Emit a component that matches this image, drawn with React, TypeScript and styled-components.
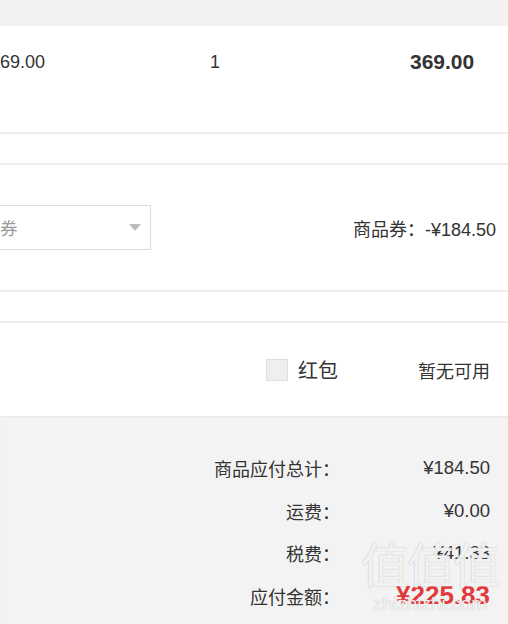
import React from "react";
import styled, { createGlobalStyle } from "styled-components";

const Global = createGlobalStyle`
  html, body { margin: 0; padding: 0; background: #fff; overflow: hidden; }
  body { font-family: "Liberation Sans", "Noto Sans CJK SC", sans-serif; color: #333; }
`;

const Page = styled.div`
  position: relative;
  width: 508px;
  height: 624px;
  overflow: hidden;
  display: flex;
  flex-direction: column;
`;

const HeaderBand = styled.div`
  height: 26px;
  background: #f2f2f2;
  flex-shrink: 0;
`;

const ProductRow = styled.div`
  height: 108px;
  display: flex;
  align-items: flex-start;
  padding-top: 23px;
  box-sizing: border-box;
  border-bottom: 2px solid #ededed;
  flex-shrink: 0;
`;

const Cell = styled.div<{ $w: number; $offset?: number; $bold?: boolean; $size?: number }>`
  width: ${(p) => p.$w}px;
  margin-left: ${(p) => p.$offset ?? 0}px;
  font-size: ${(p) => p.$size ?? 18}px;
  font-weight: ${(p) => (p.$bold ? 700 : 400)};
  line-height: 26px;
  color: #333;
  flex-shrink: 0;
`;

const Gap = styled.div<{ $h: number }>`
  height: ${(p) => p.$h}px;
  flex-shrink: 0;
`;

const Section = styled.div<{ $h: number; $pr: number; $noBottom?: boolean }>`
  height: ${(p) => p.$h}px;
  box-sizing: border-box;
  border-top: 2px solid #ededed;
  border-bottom: ${(p) => (p.$noBottom ? "none" : "2px solid #ededed")};
  display: flex;
  align-items: center;
  justify-content: space-between;
  padding-right: ${(p) => p.$pr}px;
  flex-shrink: 0;
`;

const Select = styled.div`
  width: 230px;
  height: 45px;
  margin-left: -79px;
  box-sizing: border-box;
  border: 1px solid #dcdcdc;
  display: flex;
  align-items: center;
  justify-content: space-between;
  padding: 0 9px 0 8px;
  font-size: 17.5px;
  color: #9a9a9a;
  font-family: "Noto Sans CJK SC", sans-serif;
`;

const Caret = styled.span`
  width: 0;
  height: 0;
  border-left: 6px solid transparent;
  border-right: 6px solid transparent;
  border-top: 7px solid #bdbdbd;
`;

const CouponValue = styled.div`
  display: flex;
  align-items: baseline;
  color: #333;
`;

const CJK = styled.span<{ $size?: number }>`
  font-family: "Noto Sans CJK SC", sans-serif;
  font-size: ${(p) => p.$size ?? 17}px;
`;

const Num = styled.span<{ $size?: number }>`
  font-family: "Liberation Sans", sans-serif;
  font-size: ${(p) => p.$size ?? 18}px;
`;

const RedPacketRow = styled.div`
  display: flex;
  align-items: center;
  margin-left: auto;
`;

const Checkbox = styled.span`
  width: 22px;
  height: 22px;
  box-sizing: border-box;
  background: #efefef;
  border: 1px solid #dedede;
  margin-right: 10px;
`;

const RedLabel = styled.span`
  font-family: "Noto Sans CJK SC", sans-serif;
  font-size: 20px;
  color: #333;
  width: 120px;
`;

const NoneText = styled.span`
  font-family: "Noto Sans CJK SC", sans-serif;
  font-size: 18px;
  color: #333;
`;

const Summary = styled.div`
  flex: 1;
  background: #f3f3f3;
  box-shadow: inset 0 2px 2px -1px #e6e6e6;
  padding-top: 31px;
  display: flex;
  flex-direction: column;
`;

const SumRow = styled.div`
  height: 42.5px;
  display: grid;
  grid-template-columns: 1fr 150px;
  align-items: center;
  padding-right: 18px;
  flex-shrink: 0;
`;

const SumLabel = styled.span`
  font-family: "Noto Sans CJK SC", sans-serif;
  font-size: 18px;
  color: #333;
  text-align: right;
`;

const SumValue = styled.span<{ $total?: boolean }>`
  text-align: right;
  font-family: "Liberation Sans", sans-serif;
  font-size: ${(p) => (p.$total ? 26 : 18.5)}px;
  font-weight: ${(p) => (p.$total ? 700 : 400)};
  color: ${(p) => (p.$total ? "#e4393c" : "#333")};
`;

const Watermark = styled.div`
  position: absolute;
  left: 356px;
  top: 530px;
  width: 148px;
  display: flex;
  flex-direction: column;
  align-items: center;
  pointer-events: none;
  color: rgba(255, 255, 255, 0.85);
  text-shadow: 0 0 1px rgba(120, 120, 120, 0.6);
`;

const WmBig = styled.span`
  font-family: "Noto Sans CJK SC", sans-serif;
  font-size: 48px;
  line-height: 64px;
  letter-spacing: -2px;
`;

const WmSmall = styled.span`
  font-family: "Liberation Sans", sans-serif;
  font-size: 19px;
  line-height: 20px;
`;

const summary = [
  { label: "商品应付总计：", value: "¥184.50" },
  { label: "运费：", value: "¥0.00" },
  { label: "税费：", value: "¥41.33" },
  { label: "应付金额：", value: "¥225.83", total: true },
];

export default function App() {
  return (
    <Page>
      <Global />
      <HeaderBand />
      <ProductRow>
        <Cell $w={220} $offset={-10}>369.00</Cell>
        <Cell $w={200}>1</Cell>
        <Cell $w={70} $bold $size={21}>369.00</Cell>
      </ProductRow>
      <Gap $h={29} />
      <Section $h={129} $pr={12}>
        <Select>
          <span>使用商品券</span>
          <Caret />
        </Select>
        <CouponValue>
          <CJK $size={18}>商品券：</CJK>
          <Num>-¥184.50</Num>
        </CouponValue>
      </Section>
      <Gap $h={29} />
      <Section $h={95} $pr={18} $noBottom>
        <RedPacketRow>
          <Checkbox />
          <RedLabel>红包</RedLabel>
          <NoneText>暂无可用</NoneText>
        </RedPacketRow>
      </Section>
      <Summary>
        {summary.map((r) => (
          <SumRow key={r.label}>
            <SumLabel>{r.label}</SumLabel>
            <SumValue $total={r.total}>{r.value}</SumValue>
          </SumRow>
        ))}
      </Summary>
      <Watermark>
        <WmBig>值值值</WmBig>
        <WmSmall>zhizhizhi.com</WmSmall>
      </Watermark>
    </Page>
  );
}
